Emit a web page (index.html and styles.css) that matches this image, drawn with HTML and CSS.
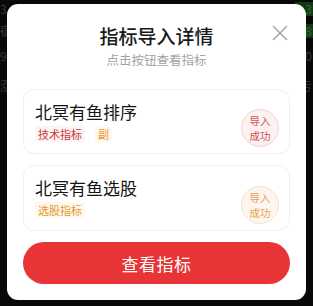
FILE: index.html
```html
<!DOCTYPE html>
<html lang="zh">
<head>
<meta charset="utf-8">
<link rel="stylesheet" href="styles.css">
</head>
<body>
<div class="backdrop">
  <div class="bg-row r1"><span class="bl">3</span><span class="br green">3</span></div>
  <div class="bg-row r2"><span class="bl">宿</span><span class="br green">8</span></div>
  <div class="bg-row r3"><span class="bl">9</span><span class="br">0</span></div>
  <div class="bg-row r4"><span class="bl">涨</span><span class="br">亏</span></div>
</div>
<div class="modal">
  <button class="close" aria-label="关闭">
    <svg width="16" height="16" viewBox="0 0 16 16"><path d="M1 1 L15 15 M15 1 L1 15" stroke="#9a9a9a" stroke-width="1.3" fill="none"/></svg>
  </button>
  <div class="head">
    <div class="title">指标导入详情</div>
    <div class="sub">点击按钮查看指标</div>
  </div>
  <div class="list">
    <div class="card">
      <div class="info">
        <div class="name">北冥有鱼排序</div>
        <div class="tags"><span class="tag red">技术指标</span><span class="tag orange">副</span></div>
      </div>
      <div class="stamp red-stamp"><span class="sl">导入</span><span class="sl">成功</span></div>
    </div>
    <div class="card">
      <div class="info">
        <div class="name">北冥有鱼选股</div>
        <div class="tags"><span class="tag orange">选股指标</span></div>
      </div>
      <div class="stamp orange-stamp"><span class="sl">导入</span><span class="sl">成功</span></div>
    </div>
  </div>
  <button class="cta">查看指标</button>
</div>
</body>
</html>
```
FILE: styles.css
```css
* { box-sizing: border-box; }
html, body { margin: 0; padding: 0; }
body {
  width: 313px;
  height: 306px;
  background: #080808;
  position: relative;
  overflow: hidden;
  font-family: "Noto Sans CJK SC", "Noto Sans", sans-serif;
  padding: 4px 7px 0 7px;
}
.backdrop {
  position: absolute;
  inset: 0;
  display: grid;
  grid-template-rows: 14px 30px 20px 40px;
  padding-top: 2px;
  color: #3a3a3a;
  font-size: 12px;
}
.bg-row { display: flex; justify-content: space-between; align-items: center; line-height: 14px; }
.bl { margin-left: 0; }
.br { padding: 0 1px 0 10px; }
.green { background: #0f3a12; color: #2f6a33; }
.modal {
  position: relative;
  width: 299px;
  height: 296px;
  background: #fff;
  border-radius: 11px;
  padding: 0 16px 16px;
  display: flex;
  flex-direction: column;
}
.close {
  position: absolute;
  top: 21px;
  right: 18px;
  width: 16px;
  height: 16px;
  padding: 0;
  border: 0;
  background: none;
  display: flex;
}
.head { padding-top: 19px; text-align: center; }
.title { font-size: 19px; line-height: 25px; font-weight: 500; color: #1a1a1a; }
.sub { margin-top: 3px; font-size: 12.5px; line-height: 18px; color: #a3a3a3; }
.list { margin-top: 20px; display: flex; flex-direction: column; gap: 11px; }
.card {
  height: 65px;
  border: 1px solid #f0f0f0;
  border-radius: 11px;
  padding: 11px 10px 0 11px;
  display: flex;
  justify-content: space-between;
  align-items: center;
}
.card + .card { height: 66px; }
.info { align-self: flex-start; }
.name { font-size: 17px; line-height: 22px; color: #151515; }
.tags { margin-top: 3px; display: flex; gap: 10px; }
.tag { font-size: 11px; line-height: 16px; padding: 0 3px; border-radius: 2px; }
.tag.red { color: #c8383c; background: #fdf4f4; }
.tag.orange { color: #e6982e; background: #fff8ee; }
.stamp {
  width: 38px;
  height: 38px;
  border-radius: 50%;
  font-size: 10.5px;
  display: flex;
  flex-direction: column;
  align-items: center;
  justify-content: center;
  margin-top: 2px;
}
.sl { display: block; height: 15px; line-height: 15px; }
.red-stamp { color: #cf5357; background: #fcf1f1; border: 1px solid #f1d2d2; }
.orange-stamp { color: #e8a057; background: #fef6ee; border: 1px solid #f6e1cb; }
.cta {
  margin-top: 11px;
  height: 42px;
  border: 0;
  border-radius: 21px;
  background: #e83436;
  color: #fff;
  font-family: "Noto Sans CJK SC", "Noto Sans", sans-serif;
  font-size: 17px;
  letter-spacing: 0.5px;
}
```
